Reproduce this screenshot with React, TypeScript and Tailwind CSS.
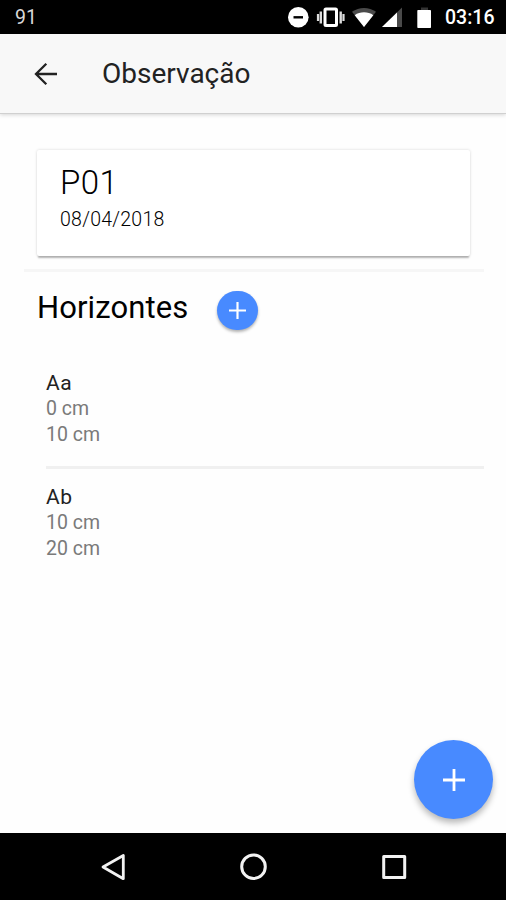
interface Horizonte {
  id: number
  nome: string
  inicio: string
  fim: string
}

const horizontes: Horizonte[] = [
  { id: 1, nome: "Aa", inicio: "0 cm", fim: "10 cm" },
  { id: 2, nome: "Ab", inicio: "10 cm", fim: "20 cm" },
]

function StatusBar() {
  return (
    <div className="flex h-[34px] shrink-0 items-center justify-between bg-black pt-[2px] pr-[10px] pl-[15px] text-white">
      <span className="text-[19.5px] leading-none text-[#d8d8d8]">91</span>
      <div className="flex items-center">
        <svg width="160" height="34" viewBox="0 0 160 34" className="shrink-0">
          {/* do not disturb */}
          <circle cx="22.3" cy="16.3" r="10.3" fill="#fff" />
          <path d="M17.5 16.3h9.5" stroke="#000" strokeWidth="2.4" />
          {/* vibrate */}
          <rect x="49" y="8" width="11.5" height="16.6" rx="1" fill="none" stroke="#fff" strokeWidth="3" />
          <path d="M44.8 10.5v12M64.7 10.5v12" stroke="#ddd" strokeWidth="2.4" />
          <path d="M42 13v7M67.5 13v7" stroke="#ddd" strokeWidth="2.2" />
          {/* wifi */}
          <path d="M88 26L76 10.7C83 5.6 93 5.6 100 10.7Z" fill="#4a4a4a" />
          <path d="M88 26L78.7 14.2C84 10.4 92 10.4 97.3 14.2Z" fill="#fff" />
          {/* signal */}
          <path d="M106 26L126 6.5V26Z" fill="#4a4a4a" />
          <path d="M106 26L121 11.5V26Z" fill="#fff" />
          {/* battery */}
          <path d="M145 6.5h7v3h-7z" fill="#333" />
          <rect x="141.3" y="9" width="13.7" height="18" rx="0.8" fill="#fff" />
        </svg>
        <span className="ml-[9px] w-[51px] whitespace-nowrap text-[19.5px] leading-none font-medium">03:16</span>
      </div>
    </div>
  )
}

function Header() {
  return (
    <header className="relative z-10 flex h-[80px] shrink-0 items-center border-b border-[#d0d0d0] bg-[#f8f8f8] pl-[34px] shadow-[0_1px_4px_rgba(0,0,0,0.16)]">
      <button aria-label="Voltar" className="h-6 w-6">
        <svg width="24" height="24" viewBox="0 0 24 24" fill="none" stroke="#222" strokeWidth="2.3">
          <path d="M23 12H2.5M12.3 1.7L2 12l10.3 10.3" />
        </svg>
      </button>
      <h1 className="ml-[44px] text-[28px] leading-none text-[#222]">Observação</h1>
    </header>
  )
}

function PlusIcon({ size }: { size: number }) {
  return (
    <svg width={size} height={size} viewBox="0 0 22 22" stroke="#fff" strokeWidth="2.8">
      <path d="M11 0v22M0 11h22" />
    </svg>
  )
}

function NavigationBar() {
  return (
    <nav className="flex h-[67px] shrink-0 items-center justify-between bg-black px-[99px]">
      <svg width="28" height="28" viewBox="0 0 28 28" fill="none" stroke="#f2f2f2" strokeWidth="2.8" strokeLinejoin="round">
        <path d="M24.3 2.5v23.2L4 14Z" />
      </svg>
      <svg width="28" height="28" viewBox="0 0 28 28" fill="none" stroke="#f2f2f2" strokeWidth="3">
        <circle cx="14.5" cy="13.7" r="11.8" />
      </svg>
      <svg width="28" height="28" viewBox="0 0 28 28" fill="none" stroke="#f2f2f2" strokeWidth="3" strokeLinejoin="round">
        <rect x="4.7" y="3.4" width="21" height="21" />
      </svg>
    </nav>
  )
}

export default function App() {
  return (
    <div className="flex h-[900px] w-[506px] flex-col overflow-hidden bg-white font-['Roboto',sans-serif] text-black">
      <StatusBar />
      <Header />

      <main className="relative flex-1 bg-[#fefefe] pt-9">
        <section className="mr-9 ml-[37px] h-[106px] rounded-[2px] bg-white pt-[14px] pl-[23px] shadow-[0_3px_2px_-1px_rgba(0,0,0,0.28),0_0_3px_rgba(0,0,0,0.16)]">
          <h2 className="text-[33px] leading-[38px] font-light tracking-[0.4px] text-black">P01</h2>
          <p className="text-[19.5px] leading-[36px] font-light tracking-[0.25px] text-black">08/04/2018</p>
        </section>

        <hr className="mt-[13px] mr-[22px] ml-6 border-t-[3px] border-[#f6f6f6]" />

        <div className="mt-[19px] flex h-10 pl-[37px]">
          <h2 className="w-[180px] text-[31px] leading-[34px] tracking-[0.1px]">Horizontes</h2>
          <button
            aria-label="Adicionar horizonte"
            className="flex h-[39px] w-[41px] items-center justify-center rounded-full bg-[#488aff] shadow-[0_2px_3px_rgba(0,0,0,0.3)]"
          >
            <PlusIcon size={17} />
          </button>
        </div>

        <ul className="mt-6 mr-[22px] ml-[46px]">
          {horizontes.map((horizonte) => (
            <li key={horizonte.id} className="h-[114px] border-[#f0f0f0] pt-[15px] not-last:border-b-[3px]">
              <h3 className="text-[21px] leading-[26px] tracking-[0.6px] text-[#222]">{horizonte.nome}</h3>
              <p className="text-[19.5px] leading-[25.5px] text-[#7a7a7a]">{horizonte.inicio}</p>
              <p className="text-[19.5px] leading-[25.5px] text-[#7a7a7a]">{horizonte.fim}</p>
            </li>
          ))}
        </ul>

        <button
          aria-label="Adicionar observação"
          className="absolute right-[13px] bottom-[14px] flex h-[79px] w-[79px] items-center justify-center rounded-full bg-[#488aff] shadow-[0_4px_6px_rgba(0,0,0,0.28)]"
        >
          <PlusIcon size={22} />
        </button>
      </main>

      <NavigationBar />
    </div>
  )
}
